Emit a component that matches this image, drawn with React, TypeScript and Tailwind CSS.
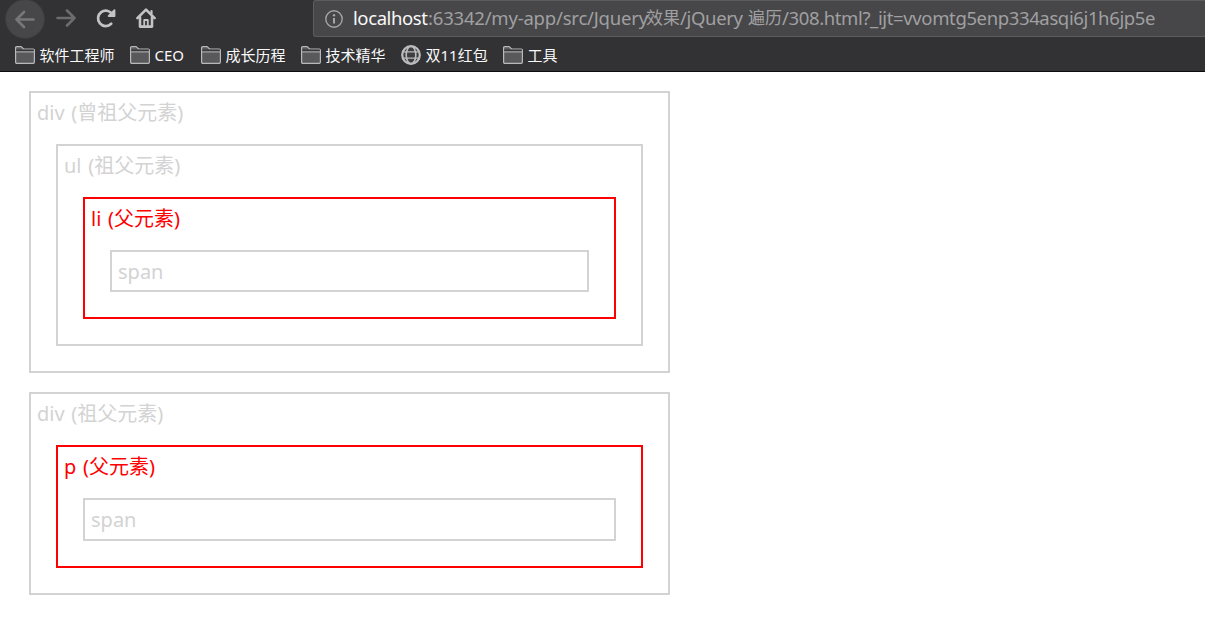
import type { ReactNode } from "react";
import clsx from "clsx";

/* ── Toolbar icons ────────────────────────────── */
function BackIcon() {
  return (
    <svg width="20" height="20" viewBox="0 0 20 20" fill="none" stroke="#77777a" strokeWidth="2.6" strokeLinecap="round" strokeLinejoin="round">
      <path d="M18.500 10.500H1.500M9 3L1.500 10.500 9 18" />
    </svg>
  );
}

function ForwardIcon() {
  return (
    <svg width="20" height="20" viewBox="0 0 20 20" fill="none" stroke="#6c6c6e" strokeWidth="2.6" strokeLinecap="round" strokeLinejoin="round">
      <path d="M1.500 10h17M11 2.500l7.500 7.500-7.500 7.500" />
    </svg>
  );
}

function ReloadIcon() {
  return (
    <svg width="20" height="20" viewBox="0 0 20 20" fill="none" stroke="#c3c3c4" strokeLinecap="round" strokeLinejoin="round">
      <path d="M16.300 6.300A7.700 7.700 0 1 0 15.200 15.800" strokeWidth="2.700" />
      <path d="M18.500 2.200V8h-5.800z" fill="#c3c3c4" strokeWidth="1.800" />
    </svg>
  );
}

function HomeIcon() {
  return (
    <svg width="20" height="20" viewBox="0 0 20 20" fill="none" stroke="#c3c3c4" strokeWidth="2.600" strokeLinecap="round" strokeLinejoin="round">
      <path d="M1.400 10.200L10 1.600l8.600 8.600" />
      <path d="M4 9v9.600h12V9" />
      <path d="M15.500 5.500V3" strokeWidth="2.200" />
      <path d="M8.200 18v-6h3.600v6" strokeWidth="1.800" />
    </svg>
  );
}

function InfoIcon() {
  return (
    <svg width="18" height="18" viewBox="0 0 18 18" fill="none">
      <circle cx="9" cy="9" r="8.200" stroke="#a5a5a7" strokeWidth="1.400" />
      <path d="M9 8v5.500" stroke="#a5a5a7" strokeWidth="2" />
      <circle cx="9" cy="5.200" r="1.200" fill="#a5a5a7" />
    </svg>
  );
}

function FolderIcon() {
  return (
    <svg width="20" height="18" viewBox="0 0 20 18" stroke="#b9b9ba" strokeWidth="1.200" strokeLinejoin="round">
      <path d="M.6 16V1.800Q.6.600 1.800.600h4.400L8.600 3h9.600q1.200 0 1.200 1.200V16q0 1.400-1.200 1.400H1.800Q.6 17.400.6 16z" fill="#59595b" />
      <path d="M1.200 3.600h17.600v2H1.200z" fill="#39393b" stroke="none" />
      <path d="M.6 5.900h18.800" fill="none" strokeWidth="1" />
    </svg>
  );
}

function GlobeIcon() {
  return (
    <svg width="20" height="20" viewBox="0 0 20 20" fill="none" stroke="#bcbcbd">
      <circle cx="10" cy="10" r="8.800" fill="#3e3e40" strokeWidth="2.200" />
      <ellipse cx="10" cy="10" rx="4.800" ry="8.800" strokeWidth="1.600" />
      <path d="M2 6.800h16M2 13.200h16" strokeWidth="1.300" />
    </svg>
  );
}

/* ── Bookmarks ────────────────────────────────── */
const bookmarks = [
  { label: "软件工程师", icon: "folder", width: "w-[115px]" },
  { label: "CEO", icon: "folder", width: "w-[71px]" },
  { label: "成长历程", icon: "folder", width: "w-[100px]" },
  { label: "技术精华", icon: "folder", width: "w-[100px]" },
  { label: "双11红包", icon: "globe", width: "w-[102px]" },
  { label: "工具", icon: "folder", width: "w-[70px]" },
];

function Toolbar() {
  return (
    <header className="h-[72px] bg-[#323234] border-b border-[#0c0c0d] overflow-hidden">
      <div className="flex h-[38px]">
        <div className="flex w-[313px] shrink-0 pl-[5px]">
          <button className="-mt-[1px] flex size-10 items-center justify-center rounded-full border border-[#3c3c3e] bg-[#474749]">
            <BackIcon />
          </button>
          <div className="ml-[11px] mt-2 flex gap-5">
            <ForwardIcon />
            <ReloadIcon />
            <HomeIcon />
          </div>
        </div>
        <div className="flex h-[37px] flex-1 items-center rounded-l-[3px] border border-r-0 border-[#5c5c5e] bg-[#474749] pl-[11px]">
          <InfoIcon />
          <div className="ml-[10px] flex whitespace-pre pb-0.5 text-[18.500px] leading-6 text-[#a0a0a2]">
            <span className="w-[75px] text-[#f9f9fa] tracking-[-0.400px]">localhost</span>
            <span className="w-[218px] tracking-[-0.200px]">:63342/my-app/src/Jquery</span>
            <span className="w-[34px] text-[17px]">效果</span>
            <span className="w-[68px] tracking-[-0.350px]">/jQuery </span>
            <span className="w-[34px] text-[17px]">遍历</span>
            <span className="tracking-[-0.370px]">/308.html?_ijt=vvomtg5enp334asqi6j1h6jp5e</span>
          </div>
        </div>
      </div>
      <nav className="flex h-[34px] items-center pl-[15px]">
        {bookmarks.map((b) => (
          <div key={b.label} className={clsx("flex shrink-0 items-center gap-[4.500px] whitespace-nowrap", b.width)}>
            {b.icon === "folder" ? <FolderIcon /> : <GlobeIcon />}
            <span className="text-[15px] leading-5 text-[#f9f9fa]">{b.label}</span>
          </div>
        ))}
      </nav>
    </header>
  );
}

/* ── Nested element boxes ─────────────────────── */
interface BoxProps {
  tag: string;
  note?: string;
  active?: boolean;
  className?: string;
  children?: ReactNode;
}

function Box({ tag, note, active, className, children }: BoxProps) {
  return (
    <div
      className={clsx(
        "border-2 p-1.5",
        active ? "border-[#ff0000] text-[#ff0000]" : "border-[#d3d3d3] text-[#d3d3d3]",
        className,
      )}
    >
      <div className="h-[26px] whitespace-pre text-[20px] leading-[28px] [word-spacing:1.500px]">
        {tag}
        {note && ` (${note})`}
      </div>
      {children}
    </div>
  );
}

export default function App() {
  return (
    <div className="min-h-[628px] w-[1205px] bg-white font-['Noto_Sans','Noto_Sans_CJK_SC',sans-serif]">
      <Toolbar />
      <main className="ml-[29px] mt-[19px] flex w-[641px] flex-col gap-[19px]">
        <Box tag="div" note="曾祖父元素">
          <Box tag="ul" note="祖父元素" className="m-[19px]">
            <Box tag="li" note="父元素" active className="m-[19px]">
              <Box tag="span" className="m-[19px]" />
            </Box>
          </Box>
        </Box>
        <Box tag="div" note="祖父元素">
          <Box tag="p" note="父元素" active className="m-[19px]">
            <Box tag="span" className="m-[19px] h-[43px]" />
          </Box>
        </Box>
      </main>
    </div>
  );
}
